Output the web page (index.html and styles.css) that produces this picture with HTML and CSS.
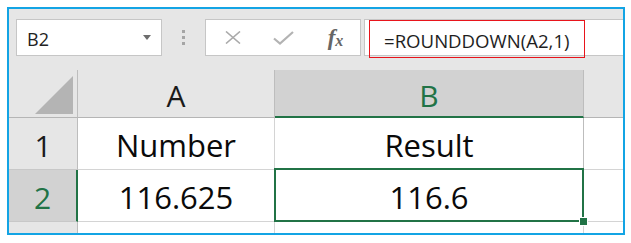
FILE: index.html
```html
<!DOCTYPE html>
<html>
<head>
<meta charset="utf-8">
<link rel="stylesheet" href="styles.css">
</head>
<body>
<div class="frame">
  <div class="toolbar">
    <div class="namebox">
      <span class="name">B2</span>
      <span class="caret"></span>
    </div>
    <div class="grip"><span></span><span></span><span></span></div>
    <div class="buttons">
      <span class="btn">
        <svg width="18" height="13" viewBox="0 0 18 13"><path d="M2 0.5 L16 12.5 M16 0.5 L2 12.5" stroke="#aaaaaa" stroke-width="1.6" fill="none"/></svg>
      </span>
      <span class="btn">
        <svg width="21" height="14" viewBox="0 0 21 14"><path d="M1 7.5 L7 12.5 L20 1" stroke="#b3b3b3" stroke-width="2.2" fill="none"/></svg>
      </span>
      <span class="btn fx"><i>f</i><i class="x">x</i></span>
    </div>
    <div class="formula">
      <div class="highlight">=ROUNDDOWN(A2,1)</div>
    </div>
  </div>
  <div class="sheet">
    <div class="corner"><span class="tri"></span></div>
    <div class="colhead">A</div>
    <div class="colhead active">B</div>
    <div class="colhead rest"></div>

    <div class="rowhead">1</div>
    <div class="cell">Number</div>
    <div class="cell">Result</div>
    <div class="cell rest"></div>

    <div class="rowhead active">2</div>
    <div class="cell">116.625</div>
    <div class="cell selected">116.6<span class="handle"></span></div>
    <div class="cell rest"></div>

    <div class="rowhead last"></div>
    <div class="cell last"></div>
    <div class="cell last"></div>
    <div class="cell last rest"></div>
  </div>
</div>
</body>
</html>
```
FILE: styles.css
```css
* { box-sizing: border-box; }
html, body { margin: 0; padding: 0; background: #ffffff; }
body { font-family: "Open Sans", "Noto Sans", sans-serif; color: #222222; }

.frame {
  margin: 7px 0 0 7px;
  width: 618px;
  height: 228px;
  border: 2px solid #13a4e4;
  background: #e6e6e6;
  overflow: hidden;
}

.toolbar {
  height: 61px;
  display: flex;
  align-items: flex-start;
  padding: 10px 0 0 7px;
}

.namebox {
  width: 146px;
  height: 37px;
  background: #fff;
  border: 1px solid #c6c6c6;
  display: flex;
  align-items: center;
  padding-left: 10px;
  padding-right: 10px;
}
.name { font-size: 18px; line-height: 1; padding-top: 2px; }
.caret {
  margin-left: auto;
  width: 0; height: 0;
  border-left: 4.5px solid transparent;
  border-right: 4.5px solid transparent;
  border-top: 5px solid #6d6d6d;
  margin-top: -1px;
}

.grip {
  width: 43px;
  height: 37px;
  display: flex;
  flex-direction: column;
  align-items: center;
  justify-content: center;
  gap: 3px;
}
.grip span { width: 3px; height: 3px; background: #a5a5a5; }

.buttons {
  width: 156px;
  height: 37px;
  background: #fff;
  border: 1px solid #c6c6c6;
  display: grid;
  grid-template-columns: 51px 51px 51px;
  padding-left: 1px;
  align-items: center;
}
.btn { display: flex; justify-content: center; align-items: center; }
.fx {
  font-family: "Liberation Serif", "DejaVu Serif", serif;
  font-weight: bold;
  color: #666666;
  font-size: 23px;
  line-height: 1;
  padding-left: 2px;
}
.fx .x { font-size: 16px; margin-top: 6px; margin-left: 0px; }

.formula {
  flex: 1;
  margin-left: 3px;
  height: 37px;
  background: #fff;
  border: 1px solid #c6c6c6;
  border-right: none;
  position: relative;
}
.highlight {
  position: absolute;
  left: 4px;
  top: 0;
  width: 216px;
  height: 38px;
  border: 1px solid #e8141b;
  display: flex;
  align-items: center;
  padding-left: 14px;
  padding-top: 2px;
  font-size: 18.6px;
  color: #1e1e1e;
  white-space: nowrap;
}

.sheet {
  display: grid;
  grid-template-columns: 69px 197px 309px 1fr;
  grid-template-rows: 48px 52px 52px 1fr;
  height: 163px;
}
.sheet > div {
  display: flex;
  align-items: center;
  justify-content: center;
  line-height: 1;
}

.corner {
  background: #e6e6e6;
  border-right: 1px solid #bdbdbd;
  border-bottom: 1px solid #b5b5b5;
  position: relative;
}
.tri {
  position: absolute;
  right: 4px;
  bottom: 3px;
  width: 38px;
  height: 38px;
  background: #b4b4b4;
  clip-path: polygon(100% 0, 100% 100%, 0 100%);
}

.colhead {
  background: #e6e6e6;
  border-right: 1px solid #bdbdbd;
  border-bottom: 1px solid #b5b5b5;
  font-size: 30px;
  padding-top: 4px;
  color: #1a1a1a;
}
.colhead.active {
  background: #d2d2d2;
  border-bottom: 2px solid #217346;
  color: #217346;
  padding-top: 5px;
}
.colhead.rest { border-right: none; }

.rowhead {
  background: #e6e6e6;
  border-right: 1px solid #bdbdbd;
  border-bottom: 1px solid #c8c8c8;
  font-size: 30px;
  padding-top: 4px;
  color: #1a1a1a;
}
.rowhead.active {
  background: #d2d2d2;
  border-right: 2px solid #217346;
  color: #217346;
}
.rowhead.last { border-bottom: none; }

.cell {
  background: #fff;
  border-right: 1px solid #d4d4d4;
  border-bottom: 1px solid #d4d4d4;
  font-size: 31px;
  padding-top: 4px;
  color: #0a0a0a;
}
.sheet > .cell:nth-child(7) { border-right-color: #bdbdbd; }
.cell.rest { border-right: none; }
.cell.last { border-bottom: none; }

.cell.selected { position: relative; }
.cell.selected::after {
  content: "";
  position: absolute;
  left: -1px;
  top: -2px;
  right: -1px;
  bottom: -1px;
  border: 2px solid #217346;
}
.handle {
  position: absolute;
  right: -4px;
  bottom: -4px;
  width: 7px;
  height: 7px;
  background: #217346;
  z-index: 2;
  outline: 1px solid #fff;
}
```
